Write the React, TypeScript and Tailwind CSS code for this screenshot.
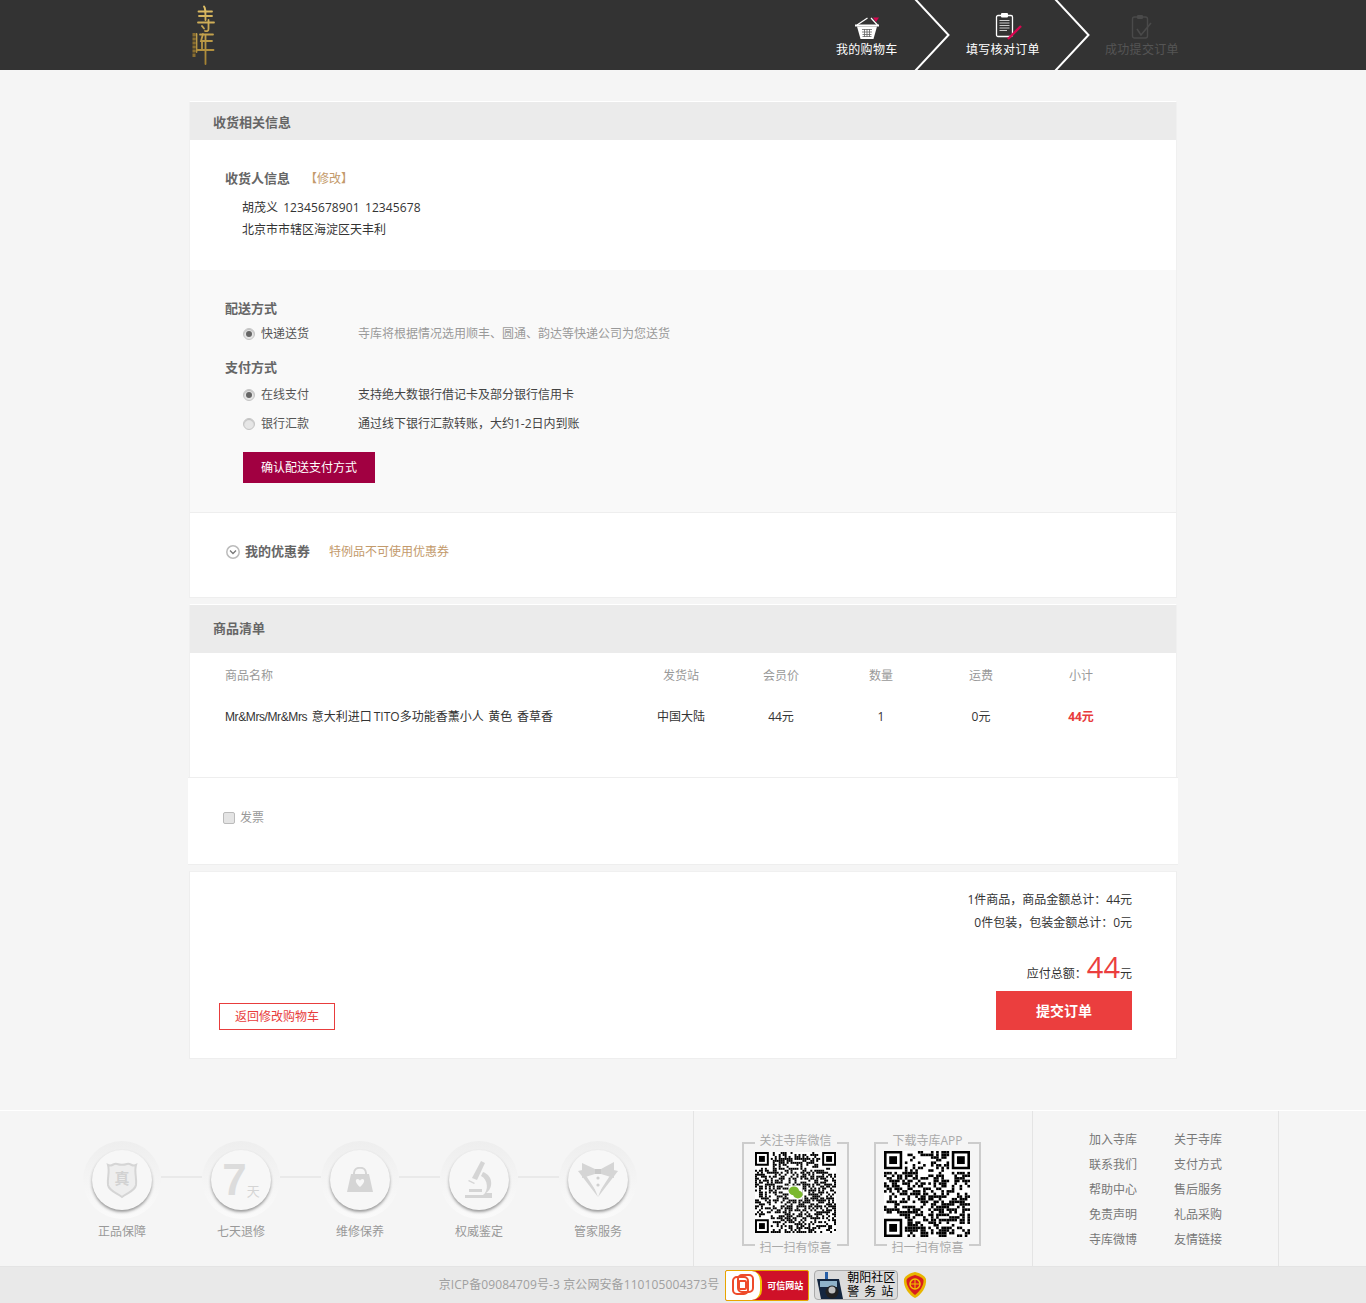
import React from "react";

const Chevron = () => (
  <svg width="36" height="70" viewBox="0 0 36 70" className="absolute right-0 top-0" fill="none">
    <path d="M1 -1L34.500 35L1 71" stroke="#fff" strokeWidth="2" />
  </svg>
);

const Logo = () => (
  <svg width="30" height="70" viewBox="9 0 30 70" fill="none" strokeLinecap="round">
    <defs>
      <linearGradient id="gold" gradientUnits="userSpaceOnUse" x1="0" y1="6" x2="0" y2="66">
        <stop offset="0" stopColor="#e0bf66" />
        <stop offset="1" stopColor="#a17f30" />
      </linearGradient>
    </defs>
    <g stroke="url(#gold)" strokeWidth="1.800">
      <path d="M24 6.500C25.500 8 25.500 10 25.500 20" />
      <path d="M18.500 11.500H32" />
      <path d="M19 16H32" />
      <path d="M18 22.500H34" />
      <path d="M28.500 20V29C28.500 31 27 31.500 25 31" />
      <path d="M22 26L24 28.500" />
      <path d="M20 34.500H33" />
      <path d="M16.500 34V52" />
      <path d="M23 34L21 41H32" />
      <path d="M17 50H33.500" />
      <path d="M25.500 35V64" />
      <path d="M22 41V50" />
    </g>
    <rect x="12.500" y="33" width="3" height="24" fill="#8a6e30" />
    <path d="M12.500 37H15.500M12.500 41H15.500M12.500 45H15.500M12.500 49H15.500M12.500 53H15.500" stroke="#33302a" strokeWidth="1" />
  </svg>
);

const BasketIcon = () => (
  <svg width="26" height="24" viewBox="0 0 26 24" fill="none">
    <path d="M3 9L13.500 2M23.500 9L17 2" stroke="#fff" strokeWidth="1.200" />
    <path d="M1 8.500H25V10.500H1z" fill="#fff" />
    <path d="M3 10.500H23L19.500 23H6.500z" fill="#fff" />
    <path d="M8 13.500H18M8 16H18M8.500 18.500H17.500M8.500 20.500H17.500M10.500 13V21M13 13V21M15.500 13V21" stroke="#666" strokeWidth="0.800" />
    <path d="M19 1.500H25L22 6z" fill="#d6064f" />
  </svg>
);

const ClipboardIcon = () => (
  <svg width="28" height="28" viewBox="0 0 28 28" fill="none" className="ml-[13px]">
    <rect x="1.500" y="3.500" width="16" height="21" rx="1.500" fill="#333" stroke="#fff" strokeWidth="1.300" />
    <rect x="6" y="1" width="7" height="4.500" rx="1" fill="#fff" />
    <path d="M4.500 8.500H14.500M4.500 11H14.500M4.500 13.500H14.500M4.500 16H14.500M4.500 18.500H12" stroke="#ccc" strokeWidth="1" />
    <path d="M13 27L26 14" stroke="#d6064f" strokeWidth="2.400" />
  </svg>
);

const DoneIcon = () => (
  <svg width="22" height="26" viewBox="0 0 22 26" fill="none">
    <rect x="1.500" y="3" width="15" height="21" rx="2" stroke="#4a4a4a" strokeWidth="1.400" />
    <rect x="6" y="1" width="6" height="4" rx="1" fill="#4a4a4a" />
    <path d="M6 15L10 21L20 9" stroke="#4a4a4a" strokeWidth="1.600" />
  </svg>
);

const Step = ({ label, icon, chevron, muted, pad }: { label: string; icon: React.ReactNode; chevron?: boolean; muted?: boolean; pad: string }) => (
  <div className={`relative h-[70px] ${chevron ? "w-[140px]" : "w-[87px]"} ${pad}`}>
    <div className="flex w-fit flex-col items-center">
      <div className="mt-[13px] flex h-[27px] items-end">{icon}</div>
      <div className={`mt-[1px] leading-[18px] tracking-[0.3px] whitespace-nowrap ${muted ? "text-[#555]" : "text-white"}`}>{label}</div>
    </div>
    {chevron && <Chevron />}
  </div>
);

const Radio = ({ on }: { on?: boolean }) => (
  <span className="flex h-[12px] w-[12px] items-center justify-center rounded-full border border-[#c4c4c4] bg-[#e6e6e6] shadow-[inset_0_1px_1px_#bbb]">
    {on && <span className="h-[6px] w-[6px] rounded-full bg-[#666]" />}
  </span>
);

const OptionRow = ({ on, label, desc, muted, h }: { on?: boolean; label: string; desc: string; muted?: boolean; h: string }) => (
  <div className={`ml-[53px] flex items-center ${h}`}>
    <Radio on={on} />
    <span className="ml-[6px] w-[97px] text-[#555]">{label}</span>
    <span className={muted ? "text-[#999]" : "text-[#444]"}>{desc}</span>
  </div>
);

const SectionTitle = ({ children }: { children: React.ReactNode }) => (
  <div className="bg-[#ebebeb] pl-[23px] text-[13px] font-bold text-[#666]">{children}</div>
);

const Badge = ({ label, children }: { label: string; children: React.ReactNode }) => (
  <div className="flex w-[78px] flex-col items-center">
    <div className="flex h-[78px] w-[78px] items-center justify-center rounded-full bg-gradient-to-b from-[#eeeeee] to-[#fafafa]">
      <div className="flex h-[60px] w-[60px] items-center justify-center rounded-full bg-[#f7f7f7] shadow-[0_2px_3px_#999]">
        {children}
      </div>
    </div>
    <div className="mt-[4px] leading-[18px] text-[#999]">{label}</div>
  </div>
);

const Connector = () => <div className="mt-[35px] h-[2px] w-[41px] bg-[#e9e9e9]" />;

const ShieldIcon = () => (
  <svg width="34" height="38" viewBox="0 0 34 38" fill="none">
    <path d="M3 4C7 6 8 2 12 3C15 4 19 4 22 3C26 2 27 6 31 4C29 11 32 17 31 24C30 30 22 32 17 36C12 32 4 30 3 24C2 17 5 11 3 4Z" fill="#eee" stroke="#d5d5d5" strokeWidth="2" />
    <text x="17" y="23" textAnchor="middle" fontSize="15" fontWeight="700" fill="#d2d2d2" fontFamily="'Noto Sans CJK SC',sans-serif">真</text>
  </svg>
);

const SevenIcon = () => (
  <div className="flex items-end">
    <span className="font-['Liberation_Sans',sans-serif] text-[44px] leading-[40px] font-bold text-[#dcdcdc]">7</span>
    <span className="mb-[1px] font-['Liberation_Sans','Noto_Sans_CJK_SC',sans-serif] text-[13px] leading-[15px] text-[#d4d4d4]">天</span>
  </div>
);

const BagIcon = () => (
  <svg width="28" height="26" viewBox="0 0 28 26">
    <path d="M8 8V6C8 -1 20 -1 20 6V8" fill="none" stroke="#d5d5d5" strokeWidth="2" />
    <path d="M5 7H23L27 25H1z" fill="#d5d5d5" />
    <path d="M14 20C9 16 9 12 11.500 12C13 12 14 13 14 14C14 13 15 12 16.500 12C19 12 19 16 14 20Z" fill="#f7f7f7" />
  </svg>
);

const ScopeIcon = () => (
  <svg width="30" height="38" viewBox="0 0 30 38" fill="#d5d5d5">
    <path d="M17 0L21 2L13 19L8 17z" />
    <path d="M5 19L11 22L10 23L4 20z" />
    <path d="M19 11C30 15 29 28 22 32H28V37H1V34H19C25 30 24 18 17 15z" />
    <path d="M5 28H18V31H5z" />
  </svg>
);

const TuxIcon = () => (
  <svg width="42" height="38" viewBox="0 0 42 38">
    <path d="M1 10L10 8L21 36L1 10Z" fill="#d5d5d5" />
    <path d="M41 10L32 8L21 36L41 10Z" fill="#d5d5d5" />
    <path d="M8 13L21 33L34 13L30 8L21 12L12 8z" fill="#f7f7f7" />
    <path d="M5 2L18 8V13L5 17zM37 1L24 8V13L37 17z" fill="#d5d5d5" />
    <rect x="18" y="8" width="6" height="5" fill="#c9c9c9" />
    <circle cx="21" cy="17" r="1.600" fill="#d0d0d0" />
    <circle cx="21" cy="24" r="1.600" fill="#d0d0d0" />
  </svg>
);

// pseudo random qr pattern, finder squares are fixed
const qrCells = (n: number, seed: number) => {
  const cells: [number, number][] = [];
  let s = seed;
  const inFinder = (x: number, y: number) =>
    (x < 8 && y < 8) || (x >= n - 8 && y < 8) || (x < 8 && y >= n - 8);
  for (let y = 0; y < n; y++) {
    for (let x = 0; x < n; x++) {
      s = (s * 1103515245 + 12345) & 0x7fffffff;
      if (!inFinder(x, y) && (s >> 16) % 100 < 50) cells.push([x, y]);
    }
  }
  return cells;
};

const Finder = ({ x, y }: { x: number; y: number }) => (
  <g>
    <path d={`M${x} ${y}h7v7h-7zM${x + 1} ${y + 1}v5h5v-5z`} fillRule="evenodd" />
    <rect x={x + 2} y={y + 2} width="3" height="3" />
  </g>
);

const Qr = ({ n, seed, size, wechat }: { n: number; seed: number; size: number; wechat?: boolean }) => (
  <svg width={size} height={size} viewBox={`0 0 ${n} ${n}`} className="bg-white">
    {qrCells(n, seed).map(([x, y]) => (
      <rect key={`${x}-${y}`} x={x} y={y} width="1" height="1" />
    ))}
    <Finder x={0} y={0} />
    <Finder x={n - 7} y={0} />
    <Finder x={0} y={n - 7} />
    {wechat && (
      <g>
        <rect x={n / 2 - 3.500} y={n / 2 - 3.500} width="7" height="7" fill="#fff" />
        <ellipse cx={n / 2 - 0.800} cy={n / 2 - 0.800} rx="2.600" ry="2.200" fill="#7ab82e" />
        <ellipse cx={n / 2 + 1.200} cy={n / 2 + 1} rx="2.400" ry="2" fill="#7ab82e" />
      </g>
    )}
  </svg>
);

const QrBox = ({ title, children, top }: { title: string; children: React.ReactNode; top: string }) => (
  <div className="relative flex h-[104px] w-[107px] justify-center border-2 border-[#ccc]">
    <div className="absolute top-[-12px] left-1/2 -translate-x-1/2 bg-[#f5f5f5] px-[5px] leading-[18px] whitespace-nowrap text-[#aaa]">{title}</div>
    <div className={`relative ${top}`}>{children}</div>
    <div className="absolute bottom-[-13px] left-1/2 -translate-x-1/2 bg-[#f5f5f5] px-[5px] leading-[18px] whitespace-nowrap text-[#aaa]">扫一扫有惊喜</div>
  </div>
);

const footerLinks = [
  ["加入寺库", "关于寺库"],
  ["联系我们", "支付方式"],
  ["帮助中心", "售后服务"],
  ["免责声明", "礼品采购"],
  ["寺库微博", "友情链接"],
];

const TrustBadge = () => (
  <div className="flex h-[31px] w-[84px] overflow-hidden rounded-[2px] border border-[#e8a500] bg-[#cf1128]">
    <div className="flex w-[36px] items-center justify-center rounded-r-[10px] border-r-2 border-[#f2c200] bg-white">
      <svg width="26" height="26" viewBox="0 0 26 26" fill="none" stroke="#ee4b2b" strokeWidth="2">
        <rect x="3" y="5" width="15" height="17" rx="4" />
        <rect x="8" y="3" width="15" height="17" rx="4" />
        <rect x="9" y="9" width="7" height="8" rx="1" />
      </svg>
    </div>
    <div className="flex-1 text-center text-[9px] leading-[29px] font-bold whitespace-nowrap text-white">可信网站</div>
  </div>
);

const PoliceBadge = () => (
  <div className="flex h-[30px] w-[84px] items-center overflow-hidden rounded-[4px] border border-[#aaa] bg-[#dcdcdc]">
    <svg width="32" height="28" viewBox="0 0 32 28" className="shrink-0">
      <path d="M2 8H24L28 28H6z" fill="#14263f" />
      <path d="M10 1h3v7h-3z" fill="#2860a8" />
      <rect x="5" y="10" width="17" height="6" fill="#8fb2c9" />
      <circle cx="17" cy="21" r="6.500" fill="#222" />
      <circle cx="17" cy="19" r="3.500" fill="#bfbfbf" />
    </svg>
    <div className="font-['Liberation_Sans','Noto_Sans_CJK_SC',sans-serif] text-[12px] leading-[14px] whitespace-nowrap text-black">
      <div>朝阳社区</div>
      <div className="tracking-[5px]">警务站</div>
    </div>
  </div>
);

const PoliceShield = () => (
  <svg width="24" height="28" viewBox="0 0 24 28">
    <path d="M12 1C17 2 22 5 23 8C24 16 18 24 12 27C6 24 0 16 1 8C2 5 7 2 12 1Z" fill="#e8b500" />
    <path d="M12 4C16 5 20 7 20.500 9C21 15 16 21 12 24C8 21 3 15 3.500 9C4 7 8 5 12 4Z" fill="#d81e1e" />
    <circle cx="12" cy="13" r="5" fill="none" stroke="#f2c200" strokeWidth="1.500" />
    <path d="M7 13H17M12 8V18" stroke="#f2c200" strokeWidth="1" />
  </svg>
);

export default function App() {
  return (
    <div className="min-h-[1303px] bg-[#f5f5f5] font-['Open_Sans','Noto_Sans_CJK_SC',sans-serif] text-[12px] text-[#333]">
      <header className="h-[70px] bg-[#333]">
        <div className="mx-auto flex w-[988px] justify-between">
          <Logo />
          <div className="flex">
            <Step label="我的购物车" icon={<BasketIcon />} chevron pad="pl-[26px]" />
            <Step label="填写核对订单" icon={<ClipboardIcon />} chevron pad="pl-[16px]" />
            <Step label="成功提交订单" icon={<DoneIcon />} muted pad="pl-[15px]" />
          </div>
        </div>
      </header>

      <main className="mx-auto w-[988px] pt-[31px]">
        <section className="border border-b-[#eee] border-x-[#f0f0f0] border-t-white bg-white">
          <SectionTitle><div className="h-[38px] leading-[40px]">收货相关信息</div></SectionTitle>
          <div className="h-[130px] pt-[27px] pl-[35px]">
            <div className="leading-[22px]">
              <span className="text-[13px] font-bold text-[#666]">收货人信息</span>
              <span className="ml-[15px] text-[#c39a6b]">【修改】</span>
            </div>
            <div className="mt-[7px] ml-[17px] leading-[22px]">
              <div className="[word-spacing:2px]">胡茂义 <span className="tracking-[0.1px]">12345678901 12345678</span></div>
              <div>北京市市辖区海淀区天丰利</div>
            </div>
          </div>
          <div className="h-[243px] border-b border-[#eee] bg-[#f9f9f9] pt-[27px]">
            <div className="pl-[35px] text-[13px] leading-[22px] font-bold text-[#666]">配送方式</div>
            <OptionRow on label="快递送货" desc="寺库将根据情况选用顺丰、圆通、韵达等快递公司为您送货" muted h="mt-[4px] h-[22px]" />
            <div className="mt-[11px] pl-[35px] text-[13px] leading-[22px] font-bold text-[#666]">支付方式</div>
            <OptionRow on label="在线支付" desc="支持绝大数银行借记卡及部分银行信用卡" h="mt-[6px] h-[22px]" />
            <OptionRow label="银行汇款" desc="通过线下银行汇款转账，大约1-2日内到账" h="mt-[7px] h-[22px]" />
            <button className="mt-[17px] ml-[53px] h-[31px] w-[132px] bg-[#a10041] text-white">确认配送支付方式</button>
          </div>
          <div className="flex h-[84px] items-center pb-[7px] pl-[36px]">
            <svg width="14" height="14" viewBox="0 0 14 14" fill="none">
              <circle cx="7" cy="7" r="6.200" stroke="#bbb" strokeWidth="1.500" />
              <path d="M4 5.500L7 8.500L10 5.500" stroke="#777" strokeWidth="1.300" />
            </svg>
            <span className="ml-[5px] text-[13px] font-bold text-[#666]">我的优惠券</span>
            <span className="ml-[19px] text-[#c39a6b]">特例品不可使用优惠券</span>
          </div>
        </section>

        <section className="mt-[6px] border-x border-t border-x-[#f0f0f0] border-t-white bg-white">
          <SectionTitle><div className="h-[48px] leading-[47px]">商品清单</div></SectionTitle>
          <div className="flex h-[46px] items-center pl-[35px] text-[#999]">
            <div className="w-[406px]">商品名称</div>
            <div className="w-[100px] text-center">发货站</div>
            <div className="w-[100px] text-center">会员价</div>
            <div className="w-[100px] text-center">数量</div>
            <div className="w-[100px] text-center">运费</div>
            <div className="w-[100px] text-center">小计</div>
          </div>
          <div className="flex h-[78px] pt-[7px] pl-[35px] leading-[22px]">
            <div className="w-[406px] [word-spacing:1.500px]">
              <span className="font-['Liberation_Sans','Noto_Sans_CJK_SC',sans-serif] tracking-[-0.4px]">Mr&amp;Mrs/Mr&amp;Mrs</span> 意大利进口<span className="ml-[2px]">TITO</span>多功能香薰小人 黄色 香草香
            </div>
            <div className="w-[100px] text-center">中国大陆</div>
            <div className="w-[100px] text-center">44元</div>
            <div className="w-[100px] text-center">1</div>
            <div className="w-[100px] text-center">0元</div>
            <div className="w-[100px] text-center font-bold text-[#e83c3c]">44元</div>
          </div>
        </section>

        <section className="mx-[-1px] flex h-[88px] items-center border-y border-[#eee] bg-white pb-[6px] pl-[35px]">
          <span className="h-[12px] w-[12px] rounded-[2px] border border-[#bbb] bg-[#e4e4e4]" />
          <span className="ml-[5px] text-[#999]">发票</span>
        </section>

        <section className="mt-[6px] h-[188px] border border-[#eee] border-t-[#f0f0f0] bg-white pt-[16px] pr-[44px] pl-[29px]">
          <div className="text-right leading-[23px]">
            <div>1件商品，商品金额总计：44元</div>
            <div>0件包装，包装金额总计：0元</div>
          </div>
          <div className="mt-[15px] text-right leading-[36px]">
            应付总额：<span className="text-[29px] text-[#eb3e3e]">44</span>元
          </div>
          <div className="mt-[-1px] flex items-end justify-between">
            <button className="h-[27px] w-[116px] border border-[#e83c3c] text-[#e83c3c]">返回修改购物车</button>
            <button className="h-[39px] w-[136px] bg-[#eb3e3e] text-[14px] font-bold text-white">提交订单</button>
          </div>
        </section>
      </main>

      <footer className="mt-[51px]">
        <div className="flex h-[157px] border-y border-t-white border-b-[#e4e4e4]">
          <div className="flex w-[694px] border-r border-[#e4e4e4] pt-[30px] pl-[83px]">
            <Badge label="正品保障"><ShieldIcon /></Badge>
            <Connector />
            <Badge label="七天退修"><SevenIcon /></Badge>
            <Connector />
            <Badge label="维修保养"><BagIcon /></Badge>
            <Connector />
            <Badge label="权威鉴定"><ScopeIcon /></Badge>
            <Connector />
            <Badge label="管家服务"><TuxIcon /></Badge>
          </div>
          <div className="flex w-[339px] gap-[25px] border-r border-[#e4e4e4] pt-[31px] pl-[48px]">
            <QrBox title="关注寺库微信" top="top-[8px]"><Qr n={41} seed={11} size={81} wechat /></QrBox>
            <QrBox title="下载寺库APP" top="top-[7px] left-[-1px]"><Qr n={33} seed={29} size={86} /></QrBox>
          </div>
          <div className="grid w-[246px] grid-cols-[85px_85px] content-start border-r border-[#e4e4e4] pt-[16px] pl-[56px] leading-[25px] text-[#777]">
            {footerLinks.flat().map((t) => (
              <div key={t}>{t}</div>
            ))}
          </div>
        </div>
        <div className="flex h-[36px] items-center justify-center gap-[5px] bg-[#e9e9e9] text-[#a0a0a0]">
          <span className="mr-[1px] tracking-[0.1px]">京ICP备09084709号-3 京公网安备110105004373号</span>
          <TrustBadge />
          <PoliceBadge />
          <PoliceShield />
        </div>
      </footer>
    </div>
  );
}
